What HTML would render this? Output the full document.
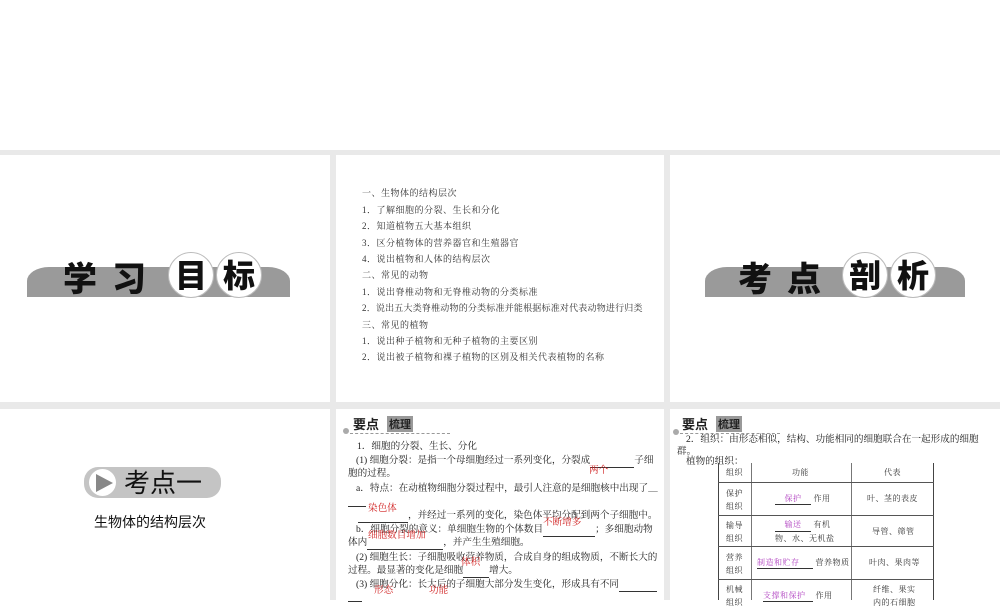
<!DOCTYPE html>
<html><head><meta charset="utf-8"><style>
*{margin:0;padding:0;box-sizing:border-box}
body{width:1000px;height:600px;background:#fff;position:relative;overflow:hidden;font-family:"Liberation Serif","Noto Serif CJK SC",serif;color:#222}
.a{position:absolute}
.g{background:#e9e9e9}
.t{position:absolute;white-space:nowrap}
.ban{position:absolute;background:#9a9a9a;border-radius:22px 22px 0 0/14px 14px 0 0;height:30px}
.bc{position:absolute;font-family:"Noto Sans CJK SC",sans-serif;font-weight:900;font-size:34px;color:#111;line-height:1}
.circ{position:absolute;width:46px;height:46px;border-radius:50%;background:#fff;border:1px solid #bbb;font-family:"Noto Sans CJK SC",sans-serif;font-weight:900;font-size:32px;line-height:42px;text-align:center;color:#111}
.s{font-size:9px;color:#333;letter-spacing:0.5px}
.p{font-size:9.6px;color:#222;line-height:12px}
.r{color:#d02020;font-size:9.6px;line-height:12px}
.m{color:#b040c0}
.ul{display:inline-block;border-bottom:1px solid #333}
</style></head><body>
<div class="a g" style="left:0;top:150px;width:1000px;height:5px"></div>
<div class="a g" style="left:0;top:402px;width:1000px;height:7px"></div>
<div class="a g" style="left:330px;top:150px;width:6px;height:450px"></div>
<div class="a g" style="left:664px;top:150px;width:6px;height:450px"></div>

<div class="ban" style="left:27px;top:267px;width:263px"></div>
<div class="bc" style="left:63px;top:260px">学</div>
<div class="bc" style="left:112px;top:260px">习</div>
<div class="circ" style="left:168px;top:252px">目</div>
<div class="circ" style="left:216px;top:252px">标</div>

<div class="t s" style="left:362px;top:186px">一、生物体的结构层次</div>
<div class="t s" style="left:362px;top:203px">1．了解细胞的分裂、生长和分化</div>
<div class="t s" style="left:362px;top:219px">2．知道植物五大基本组织</div>
<div class="t s" style="left:362px;top:236px">3．区分植物体的营养器官和生殖器官</div>
<div class="t s" style="left:362px;top:252px">4．说出植物和人体的结构层次</div>
<div class="t s" style="left:362px;top:268px">二、常见的动物</div>
<div class="t s" style="left:362px;top:285px">1．说出脊椎动物和无脊椎动物的分类标准</div>
<div class="t s" style="left:362px;top:301px;letter-spacing:0.2px">2．说出五大类脊椎动物的分类标准并能根据标准对代表动物进行归类</div>
<div class="t s" style="left:362px;top:318px">三、常见的植物</div>
<div class="t s" style="left:362px;top:334px">1．说出种子植物和无种子植物的主要区别</div>
<div class="t s" style="left:362px;top:350px">2．说出被子植物和裸子植物的区别及相关代表植物的名称</div>

<div class="ban" style="left:705px;top:267px;width:260px"></div>
<div class="bc" style="left:738px;top:260px">考</div>
<div class="bc" style="left:787px;top:260px">点</div>
<div class="circ" style="left:842px;top:252px">剖</div>
<div class="circ" style="left:890px;top:252px">析</div>

<div class="a" style="left:84px;top:467px;width:137px;height:31px;border-radius:14px;background:#c4c4c4"></div>
<div class="a" style="left:89px;top:469px;width:27px;height:27px;border-radius:50%;background:#fff"></div>
<svg class="a" style="left:93px;top:472px" width="22" height="22"><polygon points="3,2 20,11 3,20" fill="#888"/></svg>
<div class="t" style="left:124px;top:466px;font-family:'Noto Sans CJK SC',sans-serif;font-size:26px;line-height:32px;color:#111">考点一</div>
<div class="t" style="left:94px;top:512px;font-family:'Noto Sans CJK SC',sans-serif;font-size:14px;color:#111">生物体的结构层次</div>

<div class="a" style="left:343px;top:428px;width:6px;height:6px;border-radius:50%;background:#aaa"></div>
<div class="a" style="left:350px;top:433px;width:100px;border-top:1px dashed #999"></div>
<div class="t" style="left:353px;top:414px;font-family:'Noto Sans CJK SC',sans-serif;font-weight:700;font-size:13px">要点</div>
<div class="t" style="left:387px;top:416px;background:#999;font-family:'Noto Sans CJK SC',sans-serif;font-weight:700;font-size:11px;padding:0 2px">梳理</div>
<div class="t p" style="left:357px;top:441px">1．细胞的分裂、生长、分化</div>
<div class="t p" style="left:356px;top:455px">(1) 细胞分裂：是指一个母细胞经过一系列变化，分裂成<span class="ul" style="width:44px">&nbsp;</span>子细</div>
<div class="t p" style="left:348px;top:468px">胞的过程。</div>
<div class="t r" style="left:589px;top:465px">两个</div>
<div class="t p" style="left:356px;top:483px">a．特点：在动植物细胞分裂过程中，最引人注意的是细胞核中出现了＿</div>
<div class="t p" style="left:348px;top:494px"><span class="ul" style="width:18px">&nbsp;</span></div>
<div class="t p" style="left:358px;top:510px"><span class="ul" style="width:50px">&nbsp;</span>，并经过一系列的变化，染色体平均分配到两个子细胞中。</div>
<div class="t r" style="left:368px;top:503px">染色体</div>
<div class="t p" style="left:356px;top:524px">b．细胞分裂的意义：单细胞生物的个体数目<span class="ul" style="width:52px">&nbsp;</span>；多细胞动物</div>
<div class="t r" style="left:543px;top:517px">不断增多</div>
<div class="t p" style="left:348px;top:537px">体内<span class="ul" style="width:76px">&nbsp;</span>，并产生生殖细胞。</div>
<div class="t r" style="left:368px;top:530px">细胞数目增加</div>
<div class="t p" style="left:356px;top:552px">(2) 细胞生长：子细胞吸收营养物质，合成自身的组成物质，不断长大的</div>
<div class="t p" style="left:348px;top:565px">过程。最显著的变化是细胞<span class="ul" style="width:26px">&nbsp;</span>增大。</div>
<div class="t r" style="left:461px;top:557px">体积</div>
<div class="t p" style="left:356px;top:579px">(3) 细胞分化：长大后的子细胞大部分发生变化，形成具有不同<span class="ul" style="width:38px">&nbsp;</span></div>
<div class="t p" style="left:348px;top:589px"><span class="ul" style="width:14px">&nbsp;</span></div>
<div class="t r" style="left:374px;top:585px">形态</div>
<div class="t r" style="left:429px;top:585px">功能</div>

<div class="a" style="left:673px;top:429px;width:6px;height:6px;border-radius:50%;background:#aaa"></div>
<div class="a" style="left:680px;top:433px;width:100px;border-top:1px dashed #999"></div>
<div class="t" style="left:682px;top:414px;font-family:'Noto Sans CJK SC',sans-serif;font-weight:700;font-size:13px">要点</div>
<div class="t" style="left:716px;top:416px;background:#999;font-family:'Noto Sans CJK SC',sans-serif;font-weight:700;font-size:11px;padding:0 2px">梳理</div>
<div class="t p" style="left:686px;top:434px">2．组织：由形态相似，结构、功能相同的细胞联合在一起形成的细胞</div>
<div class="t p" style="left:677px;top:446px">群。</div>
<div class="t p" style="left:686px;top:456px">植物的组织：</div>
<div class="a" style="left:718px;top:463px;width:1px;height:137px;background:#444"></div>
<div class="a" style="left:751px;top:463px;width:1px;height:137px;background:#777"></div>
<div class="a" style="left:851px;top:463px;width:1px;height:137px;background:#777"></div>
<div class="a" style="left:933px;top:463px;width:1px;height:137px;background:#444"></div>
<div class="a" style="left:718px;top:482px;width:216px;height:1px;background:#555"></div>
<div class="a" style="left:718px;top:515px;width:216px;height:1px;background:#555"></div>
<div class="a" style="left:718px;top:546px;width:216px;height:1px;background:#555"></div>
<div class="a" style="left:718px;top:579px;width:216px;height:1px;background:#555"></div>
<div class="t s" style="font-size:8px;left:726px;top:467px">组织</div>
<div class="t s" style="font-size:8px;left:792px;top:467px">功能</div>
<div class="t s" style="font-size:8px;left:884px;top:467px">代表</div>
<div class="t s" style="font-size:8px;left:726px;top:487px;line-height:13px">保护<br>组织</div>
<div class="t s" style="font-size:8px;left:775px;top:493px"><span class="ul m" style="width:36px;text-align:center">保护</span> 作用</div>
<div class="t s" style="font-size:8px;left:867px;top:493px">叶、茎的表皮</div>
<div class="t s" style="font-size:8px;left:726px;top:519px;line-height:13px">输导<br>组织</div>
<div class="t s" style="font-size:8px;left:775px;top:518px;line-height:13px"><span class="ul m" style="width:36px;text-align:center">输送</span> 有机<br>物、水、无机盐</div>
<div class="t s" style="font-size:8px;left:872px;top:526px">导管、筛管</div>
<div class="t s" style="font-size:8px;left:726px;top:551px;line-height:13px">营养<br>组织</div>
<div class="t s" style="font-size:8px;left:757px;top:557px"><span class="ul m" style="width:56px">制造和贮存</span> 营养物质</div>
<div class="t s" style="font-size:8px;left:869px;top:557px">叶肉、果肉等</div>
<div class="t s" style="font-size:8px;left:726px;top:583px;line-height:13px">机械<br>组织</div>
<div class="t s" style="font-size:8px;left:763px;top:590px"><span class="ul m" style="width:50px">支撑和保护</span> 作用</div>
<div class="t s" style="font-size:8px;left:873px;top:583px;line-height:13px">纤维、果实<br>内的石细胞</div>
</body></html>
